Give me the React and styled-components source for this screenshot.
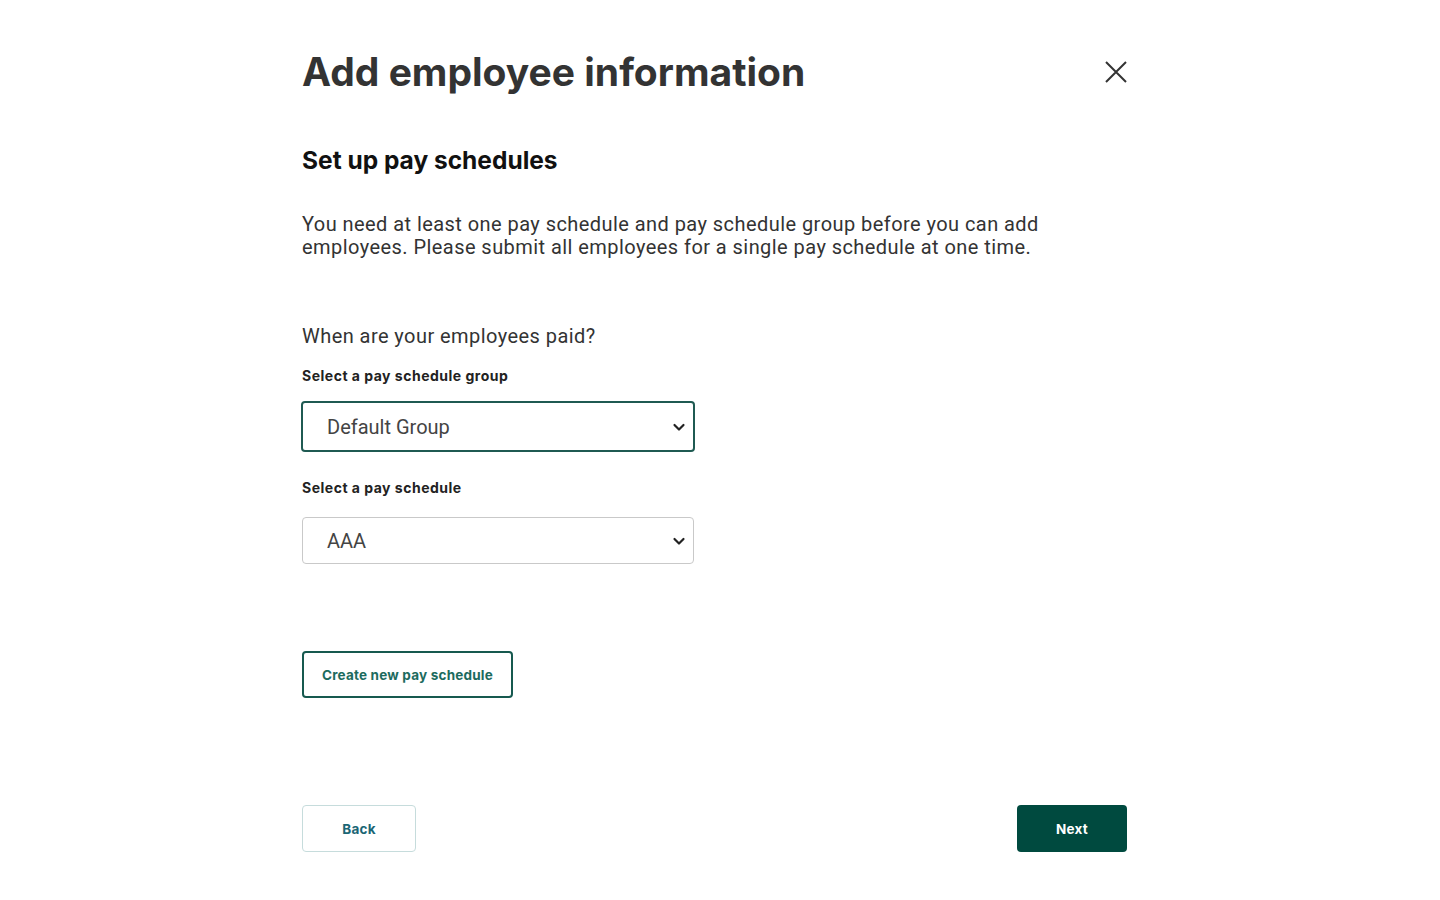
import React from "react";
import styled, { createGlobalStyle } from "styled-components";

const Global = createGlobalStyle`
  body {
    margin: 0;
    background: #fff;
    font-family: Roboto, "Liberation Sans", sans-serif;
  }
`;

const Page = styled.div`
  width: 825px;
  margin-left: 302px;
  padding-top: 48px;
  display: flex;
  flex-direction: column;
`;

const Header = styled.div`
  display: flex;
  justify-content: space-between;
  align-items: center;
`;

const Title = styled.h1`
  margin: 0;
  font-family: Inter, sans-serif;
  font-size: 39px;
  font-weight: 700;
  color: #333;
`;

const Close = styled.button`
  border: none;
  background: none;
  padding: 0;
  width: 24px;
  height: 24px;
  margin: 0 -1px 0 0;
  cursor: pointer;
`;

const Subtitle = styled.h2`
  margin: 50px 0 0;
  font-family: Inter, sans-serif;
  font-size: 24.5px;
  font-weight: 700;
  color: #111;
`;

const Text = styled.p`
  margin: ${(p) => p.$mt || 0}px 0 0;
  font-size: 20px;
  line-height: 23px;
  letter-spacing: 0.44px;
  color: #333;
  max-width: 780px;
`;

const Label = styled.div`
  margin-top: ${(p) => p.$mt}px;
  font-family: Inter, sans-serif;
  font-size: 14px;
  font-weight: 700;
  letter-spacing: 0.5px;
  color: #222;
`;

const SelectBox = styled.div`
  margin-top: ${(p) => p.$mt}px;
  margin-left: ${(p) => (p.$focus ? -1 : 0)}px;
  width: ${(p) => (p.$focus ? 394 : 392)}px;
  height: ${(p) => (p.$focus ? 51 : 47)}px;
  box-sizing: border-box;
  border: ${(p) => (p.$focus ? "2px solid #1f5a52" : "1px solid #c9c9c9")};
  border-radius: 4px;
  display: flex;
  align-items: center;
  justify-content: space-between;
  padding: 0 6px 0 24px;
  font-size: 20px;
  color: #444;
`;

const CreateRow = styled.div`
  margin-top: 87px;
  display: flex;
`;

const Actions = styled.div`
  display: flex;
  justify-content: space-between;
  margin-top: 107px;
`;

const Button = styled.button`
  height: 47px;
  box-sizing: border-box;
  border-radius: 4px;
  font-family: Inter, sans-serif;
  font-size: 13.5px;
  font-weight: 700;
  letter-spacing: 0.2px;
  cursor: pointer;
  padding: 0 ${(p) => p.$px || 18}px;
  min-width: ${(p) => p.$w || 0}px;
  ${(p) =>
    p.$variant === "primary"
      ? "background: #004a3f; color: #fff; border: none;"
      : p.$variant === "outline"
      ? "background: #fff; color: #1c6b5e; border: 2px solid #16594f;"
      : "background: #fff; color: #1a6675; border: 1.5px solid #c6dcdc;"}
`;

const Chevron = () => (
  <svg width="16" height="16" viewBox="0 0 16 16" fill="none">
    <path d="M3.5 6l4.5 4.5L12.5 6" stroke="#222" strokeWidth="2.2" strokeLinecap="round" strokeLinejoin="round" />
  </svg>
);

export default function App() {
  return (
    <>
      <Global />
      <Page>
        <Header>
          <Title>Add employee information</Title>
          <Close aria-label="Close">
            <svg width="24" height="24" viewBox="0 0 24 24" fill="none">
              <path d="M2 2l20 20M22 2L2 22" stroke="#333" strokeWidth="2" />
            </svg>
          </Close>
        </Header>
        <Subtitle>Set up pay schedules</Subtitle>
        <Text $mt={38}>
          You need at least one pay schedule and pay schedule group before you can add
          employees. Please submit all employees for a single pay schedule at one time.
        </Text>
        <Text $mt={66}>When are your employees paid?</Text>
        <Label $mt={19}>Select a pay schedule group</Label>
        <SelectBox $mt={17} $focus>
          <span>Default Group</span>
          <Chevron />
        </SelectBox>
        <Label $mt={27}>Select a pay schedule</Label>
        <SelectBox $mt={21}>
          <span>AAA</span>
          <Chevron />
        </SelectBox>
        <CreateRow>
          <Button $variant="outline" $w={209}>Create new pay schedule</Button>
        </CreateRow>
        <Actions>
          <Button $w={114}>Back</Button>
          <Button $variant="primary" $w={110}>Next</Button>
        </Actions>
      </Page>
    </>
  );
}
